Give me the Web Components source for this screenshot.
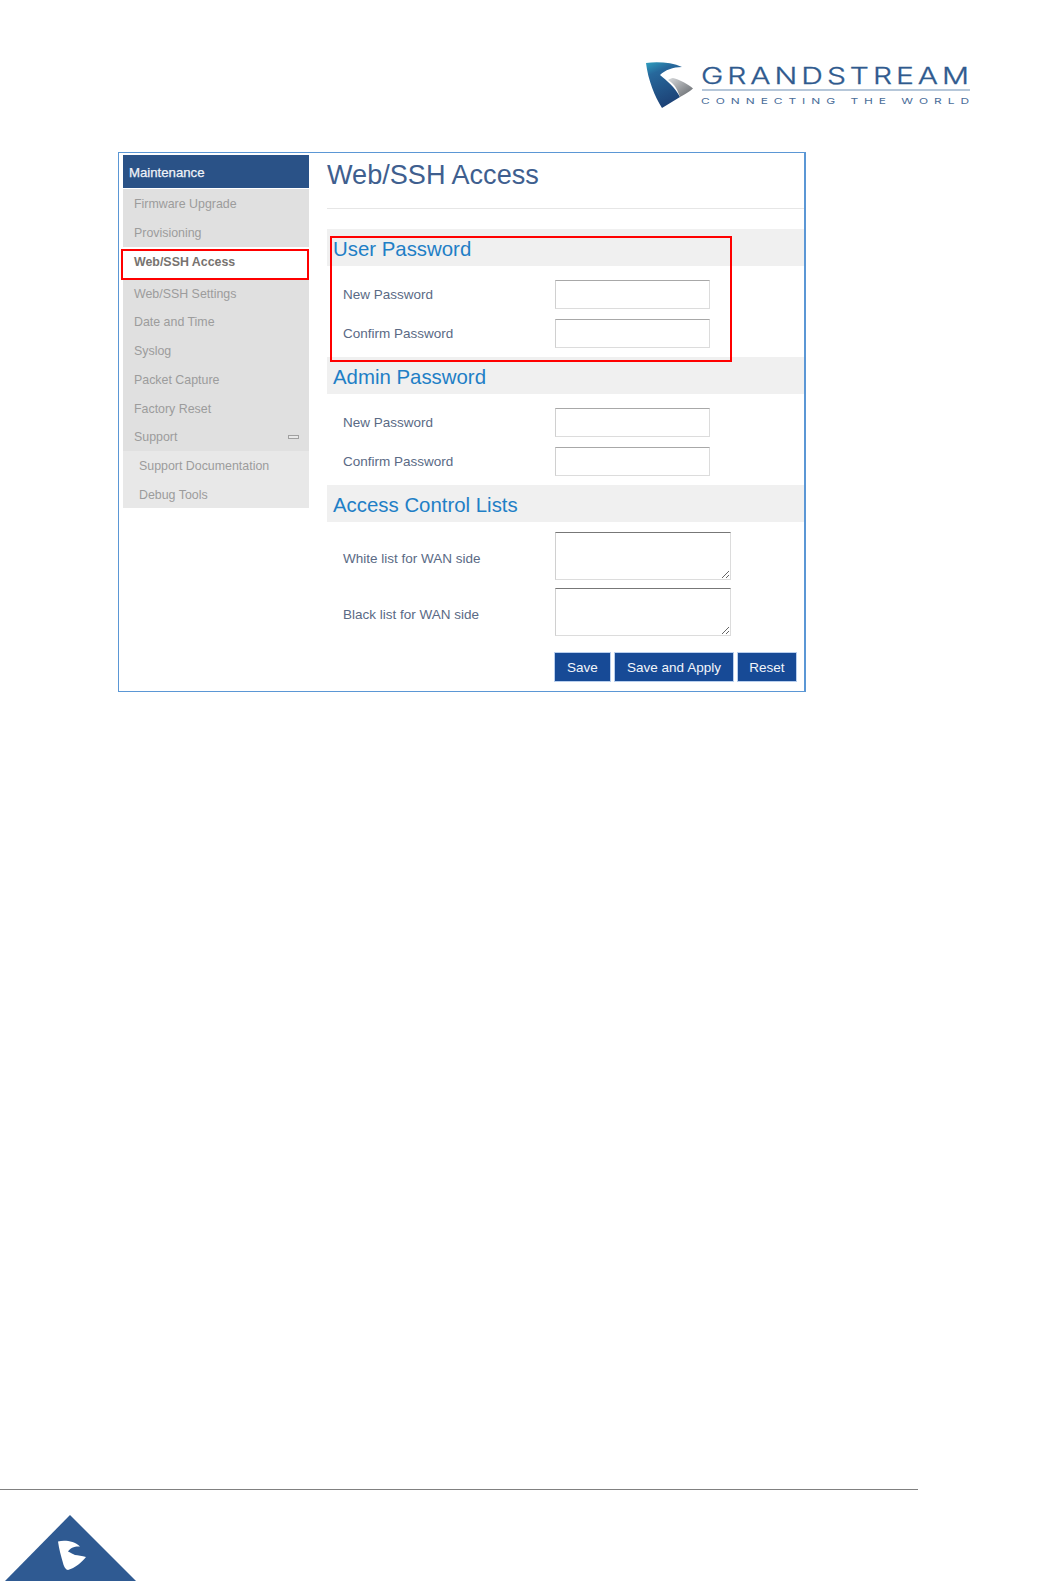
<!DOCTYPE html>
<html lang="en">
<head>
<meta charset="utf-8">
<title>Web/SSH Access</title>
<style>
html,body{margin:0;padding:0;background:#fff;}
body{font-family:"Liberation Sans",Arial,sans-serif;width:1037px;height:1581px;overflow:hidden;display:flex;flex-direction:column;}
gs-frame{flex:none;}
gs-footer{margin-top:auto;}
</style>
</head>
<body>
<gs-logo></gs-logo>
<gs-frame>
  <gs-sidebar slot="side" title-text="Maintenance">
    <gs-nav h="29">Firmware Upgrade</gs-nav>
    <gs-nav h="29">Provisioning</gs-nav>
    <gs-nav h="33" active>Web/SSH Access</gs-nav>
    <gs-nav h="27">Web/SSH Settings</gs-nav>
    <gs-nav h="29">Date and Time</gs-nav>
    <gs-nav h="29">Syslog</gs-nav>
    <gs-nav h="29">Packet Capture</gs-nav>
    <gs-nav h="29">Factory Reset</gs-nav>
    <gs-nav h="28" collapse>Support</gs-nav>
    <gs-nav h="29" sub>Support Documentation</gs-nav>
    <gs-nav h="28" sub>Debug Tools</gs-nav>
  </gs-sidebar>
  <gs-main slot="main" heading="Web/SSH Access">
    <gs-section heading="User Password" highlight>
      <gs-field label="New Password" type="password"></gs-field>
      <gs-field label="Confirm Password" type="password"></gs-field>
    </gs-section>
    <gs-section heading="Admin Password">
      <gs-field label="New Password" type="password"></gs-field>
      <gs-field label="Confirm Password" type="password"></gs-field>
    </gs-section>
    <gs-section heading="Access Control Lists" tight>
      <gs-field label="White list for WAN side" type="textarea"></gs-field>
      <gs-field label="Black list for WAN side" type="textarea"></gs-field>
    </gs-section>
    <gs-actions>
      <gs-button w="57">Save</gs-button>
      <gs-button w="120">Save and Apply</gs-button>
      <gs-button w="60">Reset</gs-button>
    </gs-actions>
  </gs-main>
</gs-frame>
<gs-footer></gs-footer>

<script>
function make(name, html){
  customElements.define(name, class extends HTMLElement{
    constructor(){
      super();
      this.attachShadow({mode:'open'});
      if(typeof html !== 'function') this.shadowRoot.innerHTML = html;
    }
    connectedCallback(){ if(typeof html === 'function') this.shadowRoot.innerHTML = html(this); }
  });
}

make('gs-logo', `
<style>
:host{display:flex;justify-content:flex-end;box-sizing:border-box;height:152px;padding:60px 67px 0 0;}
svg{display:block;}
</style>
<svg width="326" height="50" viewBox="644 60 326 50" aria-label="Grandstream">
  <defs>
    <linearGradient id="a" x1="0" y1="0" x2="0.35" y2="1">
      <stop offset="0" stop-color="#2f9fbf"/><stop offset=".28" stop-color="#27689c"/><stop offset="1" stop-color="#1d4377"/>
    </linearGradient>
    <linearGradient id="b" x1="0" y1="0" x2="1" y2="1">
      <stop offset="0" stop-color="#d8dadc"/><stop offset="1" stop-color="#5f6368"/>
    </linearGradient>
  </defs>
  <path fill="url(#a)" d="M646 63 C658 61.500 672 62.500 682 67 C673 67 665 70 660 75 C667 81 675 87 680 97 C674 101 668 104 662 108 C655 97 648 80 646 63Z"/>
  <path fill="url(#b)" d="M673 78 C680 80 688 84 693 88.500 C689 92 685 94 680 97 C678 91 675 84 668 80 C670 79 671 78 673 78Z"/>
  <text x="701" y="83.500" font-family="Inter,'Liberation Sans',sans-serif" font-size="22.500" font-weight="300" letter-spacing="3" stroke="#2f5a8e" stroke-width=".3" fill="#2f5a8e" textLength="272" lengthAdjust="spacingAndGlyphs">GRANDSTREAM</text>
  <rect x="702" y="89.500" width="268" height="1" fill="#6f8fb3"/>
  <text x="701" y="103.500" font-family="Inter,'Liberation Sans',sans-serif" font-size="8" font-weight="400" letter-spacing="4" fill="#4a6d99" textLength="274" lengthAdjust="spacingAndGlyphs">CONNECTING THE WORLD</text>
</svg>`);

make('gs-frame', `
<style>
:host{display:flex;box-sizing:border-box;width:688px;height:540px;margin-left:118px;border:1px solid #5b97d5;border-right-width:2px;padding:0 0 0 4px;gap:18px;}
</style>
<slot name="side"></slot><slot name="main"></slot>`);

make('gs-sidebar', el => `
<style>
:host{display:block;width:186px;flex:none;padding-top:2px;}
.head{height:33px;line-height:35px;background:#2a5287;color:#f0f3f8;font-size:13.200px;padding-left:6px;margin-bottom:1px;-webkit-text-stroke:.25px #f0f3f8;}
</style>
<div class="head">${el.getAttribute('title-text')||''}</div>
<slot></slot>`);

make('gs-nav', el => {
  const h = el.getAttribute('h')||29, active = el.hasAttribute('active'), sub = el.hasAttribute('sub');
  return `
<style>
:host{display:flex;align-items:center;justify-content:space-between;position:relative;box-sizing:border-box;height:${h}px;font-size:12.400px;
  background:${active?'#fff':sub?'#e8e8e8':'#e0e0e0'};color:${active?'#77736f':'#9c9c9c'};padding:${active?'0 10px 4px':sub?'1px 10px 0':'0 10px 0'} ${sub?16:11}px;
  ${active?'font-weight:700;':''}}
.ring{position:absolute;left:-2px;right:0;top:2px;bottom:0;border:2px solid #f00;box-sizing:border-box;}
.min{width:11px;height:4px;box-sizing:border-box;border:1px solid #a0a0a0;background:#e8e8e8;}
</style>
<span><slot></slot></span>
${el.hasAttribute('collapse')?'<i class="min"></i>':''}
${active?'<i class="ring"></i>':''}`;
});

make('gs-main', el => `
<style>
:host{display:block;flex:1;min-width:0;}
h1{margin:0;height:56px;box-sizing:border-box;padding-top:5px;font:400 27.100px/34px "Liberation Sans",Arial,sans-serif;color:#3f5f8f;border-bottom:1px solid #e6e6e6;}
.body{padding-top:20px;}
</style>
<h1>${el.getAttribute('heading')||''}</h1>
<div class="body"><slot></slot></div>`);

make('gs-section', el => {
  const tight = el.hasAttribute('tight');
  return `
<style>
:host{display:block;position:relative;${el.hasAttribute('highlight')?'z-index:1;':''}}
h2{margin:0;height:37px;box-sizing:border-box;padding-top:2px;line-height:36px;background:#f0f0f0;font-size:20.400px;font-weight:400;color:#1f7fc6;padding-left:6px;}
.rows{display:flex;flex-direction:column;gap:${tight?8:10}px;padding:${tight?10:14}px 0 ${tight?0:9}px 16px;}
.ring{position:absolute;left:3px;top:7px;width:402px;height:126px;box-sizing:border-box;border:2px solid #f00;pointer-events:none;}
</style>
<h2>${el.getAttribute('heading')||''}</h2>
<div class="rows"><slot></slot></div>
${el.hasAttribute('highlight')?'<i class="ring"></i>':''}`;
});

make('gs-field', el => {
  const ta = el.getAttribute('type')==='textarea';
  return `
<style>
:host{display:grid;grid-template-columns:212px auto;align-items:center;justify-content:start;font-size:13.500px;color:#5a6a85;}
span{${ta?'padding-top:5px;':''}}
input,textarea{display:block;box-sizing:border-box;margin:0;padding:0;background:#fff;outline:none;
  border:1px solid #dcdcdc;border-top-color:${ta?'#777':'#a8a8a8'};border-left-color:#d0d0d0;border-radius:0;}
input{width:155px;height:29px;}
textarea{width:176px;height:48px;}
</style>
<span>${el.getAttribute('label')||''}</span>
${ta?'<textarea></textarea>':`<input type="${el.getAttribute('type')||'text'}">`}`;
});

make('gs-actions', `
<style>
:host{display:flex;gap:3px;padding:16px 0 0 227px;}
</style><slot></slot>`);

make('gs-button', el => `
<style>
:host{display:block;}
button{display:block;box-sizing:border-box;width:${el.getAttribute('w')}px;height:30px;margin:0;padding:0;border:1px solid #b9cfee;background:#174a96;color:#f2f5fa;font:400 13.500px "Liberation Sans",Arial,sans-serif;}
</style>
<button><slot></slot></button>`);

make('gs-footer', `
<style>
:host{display:block;height:92px;box-sizing:border-box;}
hr{margin:0;border:0;height:1px;width:918px;background:#808080;}
svg{display:block;margin-top:25px;}
</style>
<hr>
<svg width="140" height="66" viewBox="0 1515 140 66" aria-hidden="true">
  <path fill="#2f5a92" d="M70 1515 L136 1581 L5 1581Z"/>
  <path fill="#fff" d="M58 1541.500 C65 1540 74 1541 80 1546.500 C75 1546 70 1548 68 1551.500 C71 1553 73 1554 75 1555 C78 1555 82 1556 86 1557 C81 1563 75 1568 68 1570 C66 1570 64 1567 63 1563 C61 1556 59 1549 58 1541.500Z"/>
</svg>`);
</script>
</body>
</html>
